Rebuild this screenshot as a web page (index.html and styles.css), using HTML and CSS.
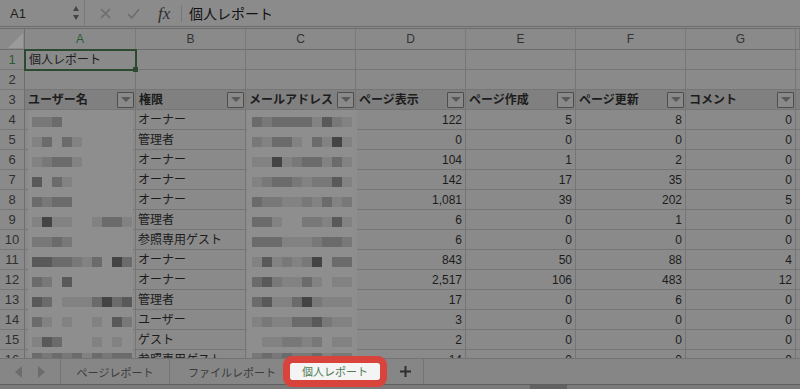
FILE: index.html
```html
<!DOCTYPE html>
<html lang="ja">
<head>
<meta charset="utf-8">
<title>個人レポート</title>
<link rel="stylesheet" href="styles.css">
</head>
<body>
<div class="app">
  <div class="fbar">
    <div class="namebox"><span class="ref">A1</span><span class="spin"><i class="up"></i><i class="down"></i></span></div>
    <svg class="xbtn" width="11" height="11" viewBox="0 0 11 11"><path d="M1 1L10 10M10 1L1 10" stroke="#6d6d6d" stroke-width="1.6" fill="none"/></svg>
    <svg class="okbtn" width="13" height="11" viewBox="0 0 13 11"><path d="M1 6L4.8 9.8L12 1.2" stroke="#6d6d6d" stroke-width="1.6" fill="none"/></svg>
    <span class="fx">fx</span>
    <span class="fsep"></span>
    <span class="ftext">個人レポート</span>
  </div>

  <div class="sheet">
    <div class="grid">
      <div class="corner"><svg width="25" height="21" viewBox="0 0 25 21"><path d="M23 4L23 19L8 19Z" fill="#9b9b9b"/></svg></div>
      <div class="ch sel">A</div><div class="ch">B</div><div class="ch">C</div><div class="ch">D</div><div class="ch">E</div><div class="ch">F</div><div class="ch">G</div><div class="ch"></div>

      <div class="rh sel">1</div><div class="c selc">個人レポート</div><div class="c"></div><div class="c"></div><div class="c"></div><div class="c"></div><div class="c"></div><div class="c"></div><div class="c"></div>
      <div class="rh">2</div><div class="c"></div><div class="c"></div><div class="c"></div><div class="c"></div><div class="c"></div><div class="c"></div><div class="c"></div><div class="c"></div>
      <div class="rh">3</div>
      <div class="c hd"><span>ユーザー名</span><span class="dd"></span></div>
      <div class="c hd"><span>権限</span><span class="dd"></span></div>
      <div class="c hd"><span>メールアドレス</span><span class="dd"></span></div>
      <div class="c hd"><span>ページ表示</span><span class="dd"></span></div>
      <div class="c hd"><span>ページ作成</span><span class="dd"></span></div>
      <div class="c hd"><span>ページ更新</span><span class="dd"></span></div>
      <div class="c hd"><span>コメント</span><span class="dd"></span></div>
      <div class="c hd"></div>

      <div class="rh">4</div><div class="c"></div><div class="c">オーナー</div><div class="c"></div><div class="c n">122</div><div class="c n">5</div><div class="c n">8</div><div class="c n">0</div><div class="c"></div>
      <div class="rh">5</div><div class="c"></div><div class="c">管理者</div><div class="c"></div><div class="c n">0</div><div class="c n">0</div><div class="c n">0</div><div class="c n">0</div><div class="c"></div>
      <div class="rh">6</div><div class="c"></div><div class="c">オーナー</div><div class="c"></div><div class="c n">104</div><div class="c n">1</div><div class="c n">2</div><div class="c n">0</div><div class="c"></div>
      <div class="rh">7</div><div class="c"></div><div class="c">オーナー</div><div class="c"></div><div class="c n">142</div><div class="c n">17</div><div class="c n">35</div><div class="c n">0</div><div class="c"></div>
      <div class="rh">8</div><div class="c"></div><div class="c">オーナー</div><div class="c"></div><div class="c n">1,081</div><div class="c n">39</div><div class="c n">202</div><div class="c n">5</div><div class="c"></div>
      <div class="rh">9</div><div class="c"></div><div class="c">管理者</div><div class="c"></div><div class="c n">6</div><div class="c n">0</div><div class="c n">1</div><div class="c n">0</div><div class="c"></div>
      <div class="rh">10</div><div class="c"></div><div class="c">参照専用ゲスト</div><div class="c"></div><div class="c n">6</div><div class="c n">0</div><div class="c n">0</div><div class="c n">0</div><div class="c"></div>
      <div class="rh">11</div><div class="c"></div><div class="c">オーナー</div><div class="c"></div><div class="c n">843</div><div class="c n">50</div><div class="c n">88</div><div class="c n">4</div><div class="c"></div>
      <div class="rh">12</div><div class="c"></div><div class="c">オーナー</div><div class="c"></div><div class="c n">2,517</div><div class="c n">106</div><div class="c n">483</div><div class="c n">12</div><div class="c"></div>
      <div class="rh">13</div><div class="c"></div><div class="c">管理者</div><div class="c"></div><div class="c n">17</div><div class="c n">0</div><div class="c n">6</div><div class="c n">0</div><div class="c"></div>
      <div class="rh">14</div><div class="c"></div><div class="c">ユーザー</div><div class="c"></div><div class="c n">3</div><div class="c n">0</div><div class="c n">0</div><div class="c n">0</div><div class="c"></div>
      <div class="rh">15</div><div class="c"></div><div class="c">ゲスト</div><div class="c"></div><div class="c n">2</div><div class="c n">0</div><div class="c n">0</div><div class="c n">0</div><div class="c"></div>
      <div class="rh">16</div><div class="c"></div><div class="c">参照専用ゲスト</div><div class="c"></div><div class="c n">14</div><div class="c n">0</div><div class="c n">0</div><div class="c n">0</div><div class="c"></div>
    </div>

    <div class="mosaic ma">
      <div class="mrow"><i class="s2"></i><i class="s2"></i><i class="s3"></i></div>
      <div class="mrow"><i class="s1"></i><i class="s3"></i><i class="s0"></i><i class="s3"></i><i class="s1"></i></div>
      <div class="mrow"><i class="s1"></i><i class="s2"></i><i class="s3"></i><i class="s3"></i><i class="s1"></i></div>
      <div class="mrow"><i class="s4"></i><i class="s0"></i><i class="s3"></i><i class="s1"></i></div>
      <div class="mrow"><i class="s3"></i><i class="s2"></i><i class="s3"></i><i class="s3"></i></div>
      <div class="mrow"><i class="s1"></i><i class="s5"></i><i class="s1"></i><i class="s1"></i><i class="s0"></i><i class="s0"></i><i class="s1"></i><i class="s3"></i><i class="s3"></i><i class="s1"></i></div>
      <div class="mrow"><i class="s2"></i><i class="s2"></i><i class="s3"></i><i class="s2"></i></div>
      <div class="mrow"><i class="s4"></i><i class="s4"></i><i class="s3"></i><i class="s3"></i><i class="s2"></i><i class="s1"></i><i class="s3"></i><i class="s0"></i><i class="s5"></i><i class="s3"></i></div>
      <div class="mrow"><i class="s3"></i><i class="s2"></i><i class="s0"></i><i class="s4"></i></div>
      <div class="mrow"><i class="s4"></i><i class="s3"></i><i class="s0"></i><i class="s1"></i><i class="s1"></i><i class="s1"></i><i class="s3"></i><i class="s5"></i><i class="s3"></i><i class="s4"></i></div>
      <div class="mrow"><i class="s3"></i><i class="s1"></i><i class="s0"></i><i class="s1"></i><i class="s0"></i><i class="s0"></i><i class="s1"></i><i class="s0"></i><i class="s4"></i><i class="s2"></i></div>
      <div class="mrow"><i class="s1"></i><i class="s4"></i><i class="s3"></i><i class="s0"></i><i class="s0"></i><i class="s0"></i><i class="s1"></i><i class="s0"></i><i class="s1"></i></div>
      <div class="mrow top"><i class="s3"></i><i class="s2"></i><i class="s3"></i><i class="s2"></i><i class="s3"></i><i class="s1"></i><i class="s3"></i><i class="s2"></i><i class="s3"></i><i class="s3"></i></div>
    </div>

    <div class="mosaic mc">
      <div class="mrow"><i class="s3"></i><i class="s2"></i><i class="s3"></i><i class="s3"></i><i class="s3"></i><i class="s3"></i><i class="s1"></i><i class="s4"></i><i class="s2"></i><i class="s1"></i></div>
      <div class="mrow"><i class="s2"></i><i class="s1"></i><i class="s3"></i><i class="s3"></i><i class="s1"></i><i class="s0"></i><i class="s3"></i><i class="s1"></i><i class="s5"></i><i class="s1"></i></div>
      <div class="mrow"><i class="s1"></i><i class="s1"></i><i class="s5"></i><i class="s1"></i><i class="s2"></i><i class="s3"></i><i class="s3"></i><i class="s1"></i><i class="s3"></i><i class="s1"></i></div>
      <div class="mrow"><i class="s1"></i><i class="s2"></i><i class="s3"></i><i class="s3"></i><i class="s2"></i><i class="s1"></i><i class="s2"></i><i class="s2"></i><i class="s4"></i><i class="s1"></i></div>
      <div class="mrow"><i class="s3"></i><i class="s2"></i><i class="s2"></i><i class="s1"></i><i class="s1"></i><i class="s2"></i><i class="s1"></i><i class="s3"></i><i class="s1"></i><i class="s2"></i></div>
      <div class="mrow"><i class="s3"></i><i class="s3"></i><i class="s1"></i><i class="s0"></i><i class="s0"></i><i class="s2"></i><i class="s2"></i><i class="s1"></i><i class="s4"></i><i class="s1"></i></div>
      <div class="mrow"><i class="s3"></i><i class="s3"></i><i class="s3"></i><i class="s1"></i><i class="s1"></i><i class="s1"></i><i class="s2"></i><i class="s3"></i><i class="s3"></i><i class="s2"></i></div>
      <div class="mrow"><i class="s1"></i><i class="s4"></i><i class="s1"></i><i class="s2"></i><i class="s1"></i><i class="s2"></i><i class="s5"></i><i class="s0"></i><i class="s3"></i><i class="s3"></i></div>
      <div class="mrow"><i class="s3"></i><i class="s4"></i><i class="s2"></i><i class="s1"></i><i class="s1"></i><i class="s3"></i><i class="s1"></i><i class="s0"></i><i class="s1"></i><i class="s1"></i></div>
      <div class="mrow"><i class="s3"></i><i class="s4"></i><i class="s1"></i><i class="s1"></i><i class="s3"></i><i class="s5"></i><i class="s2"></i><i class="s1"></i><i class="s1"></i><i class="s1"></i></div>
      <div class="mrow"><i class="s1"></i><i class="s2"></i><i class="s1"></i><i class="s1"></i><i class="s3"></i><i class="s3"></i><i class="s4"></i><i class="s2"></i><i class="s1"></i><i class="s1"></i></div>
      <div class="mrow"><i class="s0"></i><i class="s1"></i><i class="s1"></i><i class="s2"></i><i class="s2"></i><i class="s1"></i><i class="s2"></i><i class="s0"></i><i class="s1"></i><i class="s1"></i></div>
      <div class="mrow top"><i class="s2"></i><i class="s3"></i><i class="s2"></i><i class="s3"></i><i class="s2"></i><i class="s2"></i><i class="s3"></i><i class="s1"></i><i class="s2"></i><i class="s2"></i></div>
    </div>
  </div>

  <div class="tabs">
    <div class="nav"><i class="arr left"></i><i class="arr right"></i></div>
    <span class="tsep"></span>
    <div class="tab t1">ページレポート</div>
    <span class="tsep"></span>
    <div class="tab t2">ファイルレポート</div>
    <div class="tab active">個人レポート</div>
    <div class="plus"><svg width="11" height="11" viewBox="0 0 11 11"><path d="M5.5 0V11M0 5.5H11" stroke="#2e2e2e" stroke-width="2"/></svg></div>
    <span class="tsep"></span>
  </div>
  <div class="hscroll"><div class="thumb"></div></div>
</div>
</body>
</html>
```

FILE: styles.css
```css
html, body {
  margin: 0;
  padding: 0;
}
body {
  width: 800px;
  height: 389px;
  overflow: hidden;
  background: #8a8a8a;
  font-family: "Liberation Sans", "Noto Sans CJK JP", sans-serif;
  color: #1c1c1c;
}
.app {
  width: 800px;
  height: 389px;
  display: flex;
  flex-direction: column;
}

/* formula bar */
.fbar {
  height: 26px;
  display: flex;
  align-items: center;
  background: #8b8b8b;
  border-bottom: 3px double #6c6c6c;
  flex: none;
}
.namebox {
  width: 85px;
  height: 26px;
  box-sizing: border-box;
  border-right: 1px solid #7a7a7a;
  display: flex;
  align-items: center;
  justify-content: space-between;
  padding: 0 5px 0 10px;
  font-size: 13px;
  color: #1e1e1e;
}
.spin {
  display: flex;
  flex-direction: column;
  gap: 4px;
}
.spin i {
  display: block;
  width: 0;
  height: 0;
  border-left: 3.5px solid transparent;
  border-right: 3.5px solid transparent;
}
.spin .up { border-bottom: 5px solid #444; }
.spin .down { border-top: 5px solid #444; }
.xbtn { margin-left: 15px; }
.okbtn { margin-left: 16px; }
.fx {
  margin-left: 18px;
  width: 16px;
  font-family: "Liberation Serif", serif;
  font-style: italic;
  font-size: 17px;
  color: #2e2e2e;
  line-height: 1;
}
.fsep {
  margin-left: 7px;
  width: 1px;
  height: 17px;
  background: #777;
}
.ftext {
  margin-left: 7px;
  font-size: 14px;
  color: #111;
  font-family: "Noto Sans CJK JP", sans-serif;
}

/* sheet */
.sheet {
  position: relative;
  height: 329px;
  overflow: hidden;
  flex: none;
}
.grid {
  display: grid;
  grid-template-columns: 25px 111px repeat(6, 110px) 4px;
  grid-template-rows: 21px;
  grid-auto-rows: 20px;
}
.corner {
  border-right: 1px solid #6e6e6e;
  border-bottom: 1px solid #6e6e6e;
  box-sizing: border-box;
}
.corner svg { display: block; }
.ch {
  box-sizing: border-box;
  border-right: 1px solid #7a7a7a;
  border-bottom: 1px solid #6e6e6e;
  text-align: center;
  font-size: 12px;
  line-height: 21px;
  color: #333;
}
.rh {
  box-sizing: border-box;
  border-right: 1px solid #6e6e6e;
  border-bottom: 1px solid #777;
  text-align: center;
  font-family: "Liberation Sans Narrow", "Liberation Sans", sans-serif;
  font-size: 13px;
  line-height: 20px;
  color: #303030;
}
.sel { color: #2c5a33; }
.c {
  box-sizing: border-box;
  border-right: 1px solid #767676;
  border-bottom: 1px solid #767676;
  font-size: 12px;
  line-height: 20px;
  padding: 0 3px 0 2px;
  white-space: nowrap;
  overflow: hidden;
  color: #1c1c1c;
}
.n { text-align: right; }
.selc {
  position: relative;
  z-index: 2;
  overflow: visible;
  padding-left: 4px;
  outline: 2px solid #2b4a2f;
  outline-offset: -1px;
}
.selc::after {
  content: "";
  position: absolute;
  right: -3px;
  bottom: -3px;
  width: 5px;
  height: 5px;
  background: #2b4a2f;
}
.hd {
  background: #808080;
  font-weight: bold;
  display: flex;
  align-items: center;
  justify-content: space-between;
  padding: 0 1px 0 3px;
}
.dd {
  width: 17px;
  height: 16px;
  box-sizing: border-box;
  border: 1px solid #4d4d4d;
  border-radius: 1px;
  background: #8a8a8a;
  display: flex;
  align-items: center;
  justify-content: center;
  flex: none;
}
.dd::after {
  content: "";
  width: 0;
  height: 0;
  border-left: 5px solid transparent;
  border-right: 5px solid transparent;
  border-top: 5px solid #595959;
}

/* blurred (mosaic) cells */
.mosaic {
  position: absolute;
  top: 81px;
  bottom: 0;
  background: #8e8e8e;
  z-index: 1;
}
.ma { left: 28px; width: 105px; padding-left: 4px; box-sizing: border-box; }
.mc { left: 247px; width: 110px; padding-left: 5px; box-sizing: border-box; }
.mrow {
  height: 20px;
  box-sizing: border-box;
  padding-top: 7px;
  display: flex;
}
.mrow.top { padding-top: 3px; }
.mrow i {
  display: block;
  width: 10px;
  height: 10px;
}
.s0 { background: transparent; }
.s1 { background: #828282; }
.s2 { background: #787878; }
.s3 { background: #6b6b6b; }
.s4 { background: #595959; }
.s5 { background: #444444; }

/* sheet tabs */
.tabs {
  height: 26px;
  box-sizing: border-box;
  border-top: 1px solid #737373;
  background: #868686;
  display: flex;
  align-items: center;
  flex: none;
  font-family: "Noto Sans CJK JP", sans-serif;
}
.nav {
  width: 60px;
  display: flex;
  align-items: center;
  padding-left: 15px;
  gap: 16px;
  box-sizing: border-box;
}
.arr {
  display: block;
  width: 0;
  height: 0;
  border-top: 6px solid transparent;
  border-bottom: 6px solid transparent;
}
.arr.left { border-right: 7px solid #6c6c6c; }
.arr.right { border-left: 7px solid #6c6c6c; }
.tsep {
  width: 1px;
  height: 25px;
  background: #747474;
  flex: none;
}
.tab {
  font-size: 11px;
  color: #3a3a3a;
  white-space: nowrap;
}
.t1 { width: 108px; text-align: center; }
.t2 { width: 120px; padding-left: 18px; box-sizing: border-box; }
.active {
  position: relative;
  z-index: 3;
  width: 90px;
  height: 17px;
  line-height: 17px;
  text-align: center;
  background: #f4f4f4;
  color: #4d7c54;
  outline: 7px solid #d8433b;
  border-radius: 2px;
  margin-top: -1px;
}
.plus {
  width: 43px;
  padding-left: 7px;
  box-sizing: border-box;
  display: flex;
  justify-content: center;
}
.plus svg { display: block; }
.hscroll {
  height: 5px;
  box-sizing: border-box;
  border-top: 1px solid #5f5f5f;
  background: #7b7b7b;
  flex: none;
}
.thumb {
  margin-left: 530px;
  width: 37px;
  height: 4px;
  background: #626262;
}
```
